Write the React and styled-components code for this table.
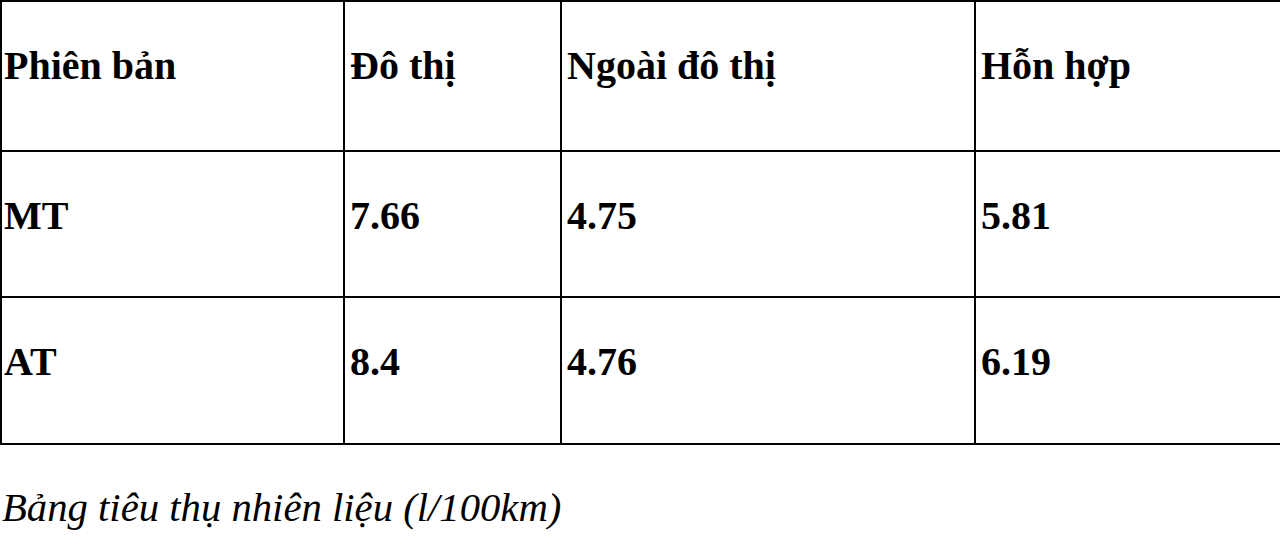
import React from "react";
import styled, { createGlobalStyle } from "styled-components";

const GlobalStyle = createGlobalStyle`
  html, body {
    margin: 0;
    padding: 0;
    background: #fff;
  }
  body {
    font-family: "Liberation Serif", "Times New Roman", serif;
    color: #000;
  }
`;

const Page = styled.div`
  width: 1280px;
  height: 547px;
  overflow: hidden;
`;

const Table = styled.table`
  width: 1280px;
  border-collapse: collapse;
  table-layout: fixed;
`;

const Row = styled.tr`
  height: ${(p) => p.h}px;
`;

const Cell = styled.td`
  border: 2px solid #000;
  padding: 41px 0 0 ${(p) => (p.first ? 2 : 5)}px;
  vertical-align: top;
  font-size: 40px;
  line-height: 46px;
  font-weight: bold;
  white-space: nowrap;
`;

const Caption = styled.p`
  margin: 40px 0 0 2px;
  font-size: 40.7px;
  line-height: 46px;
  font-style: italic;
`;

const cols = [343, 217, 414, 306];

const rows = [
  { h: 150, cells: ["Phiên bản", "Đô thị", "Ngoài đô thị", "Hỗn hợp"] },
  { h: 146, cells: ["MT", "7.66", "4.75", "5.81"] },
  { h: 147, cells: ["AT", "8.4", "4.76", "6.19"] },
];

export default function App() {
  return (
    <Page>
      <GlobalStyle />
      <Table>
        <colgroup>
          {cols.map((w, i) => (
            <col key={i} style={{ width: w }} />
          ))}
        </colgroup>
        <tbody>
          {rows.map((r, i) => (
            <Row key={i} h={r.h}>
              {r.cells.map((c, j) => (
                <Cell key={j} first={j === 0}>
                  {c}
                </Cell>
              ))}
            </Row>
          ))}
        </tbody>
      </Table>
      <Caption>Bảng tiêu thụ nhiên liệu (l/100km)</Caption>
    </Page>
  );
}
